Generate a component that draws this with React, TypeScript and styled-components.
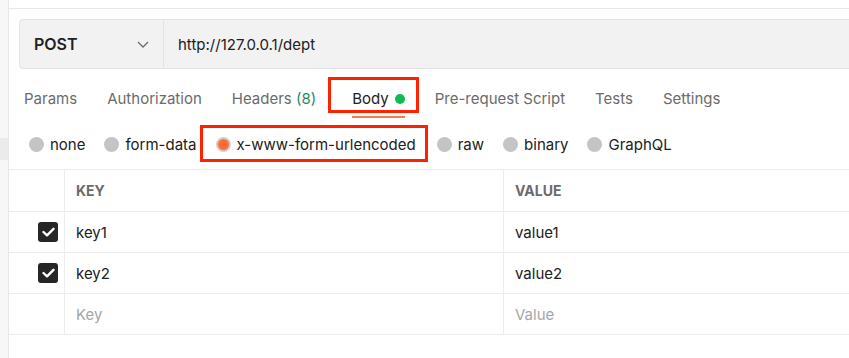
import React from "react";
import styled, { createGlobalStyle, css } from "styled-components";

const GlobalStyle = createGlobalStyle`
  html, body {
    margin: 0;
    padding: 0;
    background: #ffffff;
  }
  body {
    font-family: Inter, "Noto Sans", "Liberation Sans", sans-serif;
    color: #212121;
  }
`;

const tabs = [
  { label: "Params" },
  { label: "Authorization" },
  { label: "Headers", count: 8 },
  { label: "Body", active: true },
  { label: "Pre-request Script" },
  { label: "Tests" },
  { label: "Settings" },
];

const bodyModes = ["none", "form-data", "x-www-form-urlencoded", "raw", "binary", "GraphQL"];

const rows = [
  { key: "key1", value: "value1", checked: true },
  { key: "key2", value: "value2", checked: true },
];

const App = () => {
  return (
    <Page>
      <GlobalStyle />
      <SideStrip>
        <SideMark />
      </SideStrip>

      <Main>
        <TopEdge />

        <UrlBar>
          <Method>
            POST
            <svg width="12" height="7" viewBox="0 0 12 7" fill="none">
              <polyline points="1,1 6,6 11,1" stroke="#6b6b6b" strokeWidth="1.3" />
            </svg>
          </Method>
          <UrlText>http://127.0.0.1/dept</UrlText>
        </UrlBar>

        <Tabs>
          {tabs.map((t) => (
            <Tab key={t.label} $active={t.active}>
              {t.label}
              {t.count !== undefined && <Count>&nbsp;({t.count})</Count>}
              {t.active && <GreenDot />}
            </Tab>
          ))}
        </Tabs>

        <Modes>
          {bodyModes.map((m) => {
            const selected = m === "x-www-form-urlencoded";
            return (
              <Mode key={m} $selected={selected}>
                <RadioDot $selected={selected} />
                {m}
              </Mode>
            );
          })}
        </Modes>

        <Table>
          <HeadCell />
          <HeadCell>KEY</HeadCell>
          <HeadCell>VALUE</HeadCell>

          {rows.map((r) => (
            <React.Fragment key={r.key}>
              <CheckCell>
                {r.checked && (
                  <CheckBox>
                    <svg width="13" height="10" viewBox="0 0 13 10" fill="none">
                      <polyline
                        points="1.5,5 5,8.3 11.5,1.8"
                        stroke="#ffffff"
                        strokeWidth="2.4"
                        strokeLinecap="round"
                        strokeLinejoin="round"
                      />
                    </svg>
                  </CheckBox>
                )}
              </CheckCell>
              <Cell>{r.key}</Cell>
              <Cell>{r.value}</Cell>
            </React.Fragment>
          ))}

          <CheckCell />
          <Cell $placeholder>Key</Cell>
          <Cell $placeholder>Value</Cell>
        </Table>
      </Main>
    </Page>
  );
};

export default App;

const Page = styled.div`
  display: flex;
  width: 849px;
  height: 358px;
  overflow: hidden;
  background: #ffffff;
`;

const SideStrip = styled.div`
  width: 8px;
  flex-shrink: 0;
  display: flex;
  flex-direction: column;
  padding-top: 138px;
  background: #f7f7f7;
  border-right: 1px solid #e8e8e8;
`;

const SideMark = styled.div`
  height: 22px;
  background: #ebebeb;
`;

const Main = styled.div`
  flex: 1;
  min-width: 0;
  display: flex;
  flex-direction: column;
  overflow: hidden;
`;

const TopEdge = styled.div`
  height: 8px;
  flex-shrink: 0;
  border-bottom: 1px solid #e8e8e8;
`;

const UrlBar = styled.div`
  display: flex;
  height: 50px;
  margin: 10px -20px 0 10px;
  box-sizing: border-box;
  background: #f2f2f2;
  border: 1px solid #e4e4e4;
  border-radius: 4px;
  flex-shrink: 0;
`;

const Method = styled.div`
  width: 144px;
  box-sizing: border-box;
  display: flex;
  align-items: center;
  justify-content: space-between;
  padding: 0 14px 0 14px;
  border-right: 1px solid #e4e4e4;
  font-size: 16px;
  font-weight: 600;
  color: #212121;
`;

const UrlText = styled.div`
  display: flex;
  align-items: center;
  padding-left: 14px;
  font-size: 15px;
  color: #212121;
`;

const Tabs = styled.div`
  display: flex;
  gap: 30px;
  padding-left: 15px;
  margin-top: 12px;
  flex-shrink: 0;
`;

const Tab = styled.div<{ $active?: boolean }>`
  position: relative;
  display: flex;
  align-items: center;
  height: 37px;
  box-sizing: border-box;
  font-size: 15px;
  color: #6b6b6b;
  border-bottom: 2px solid transparent;

  ${(p) =>
    p.$active &&
    css`
      margin-left: 6px;
      color: #212121;
      border-bottom-color: #f47c4c;

      &::after {
        content: "";
        position: absolute;
        top: -4px;
        bottom: 3px;
        left: -24px;
        right: -14px;
        border: 3px solid #ff2200;
      }
    `}
`;

const Count = styled.span`
  color: #1f8a5f;
`;

const GreenDot = styled.span`
  width: 10px;
  height: 10px;
  margin-left: 6px;
  border-radius: 50%;
  background: #0cbb52;
`;

const Modes = styled.div`
  display: flex;
  align-items: stretch;
  gap: 19px;
  height: 36px;
  margin-top: 8px;
  padding-left: 20px;
  flex-shrink: 0;
`;

const Mode = styled.div<{ $selected?: boolean }>`
  position: relative;
  display: flex;
  align-items: center;
  gap: 6px;
  font-size: 15px;
  color: #212121;

  ${(p) =>
    p.$selected &&
    css`
      margin-right: 2px;

      &::after {
        content: "";
        position: absolute;
        top: -1px;
        bottom: 0;
        left: -16px;
        right: -12px;
        border: 3px solid #ff2200;
      }
    `}
`;

const RadioDot = styled.span<{ $selected?: boolean }>`
  width: 15px;
  height: 15px;
  flex-shrink: 0;
  box-sizing: border-box;
  border-radius: 50%;
  background: ${(p) => (p.$selected ? "#ff6c37" : "#c4c4c4")};
  border: ${(p) => (p.$selected ? "2px solid #cdcdcd" : "none")};
`;

const Table = styled.div`
  display: grid;
  grid-template-columns: 56px 439px 1fr;
  margin-top: 7px;
  border-top: 1px solid #ececec;
`;

const cellBase = css`
  display: flex;
  align-items: center;
  box-sizing: border-box;
  height: 41px;
  border-bottom: 1px solid #ececec;
  &:not(:nth-child(3n)) {
    border-right: 1px solid #ececec;
  }
`;

const HeadCell = styled.div`
  ${cellBase};
  height: 42px;
  padding-left: 11px;
  font-size: 14px;
  font-weight: 700;
  color: #6b6b6b;
`;

const CheckCell = styled.div`
  ${cellBase};
  justify-content: flex-end;
  padding-right: 6px;
`;

const Cell = styled.div<{ $placeholder?: boolean }>`
  ${cellBase};
  padding-left: 11px;
  font-size: 15px;
  color: ${(p) => (p.$placeholder ? "#a6a6a6" : "#212121")};
`;

const CheckBox = styled.span`
  width: 20px;
  height: 20px;
  display: flex;
  align-items: center;
  justify-content: center;
  border-radius: 3px;
  background: #262626;
`;
